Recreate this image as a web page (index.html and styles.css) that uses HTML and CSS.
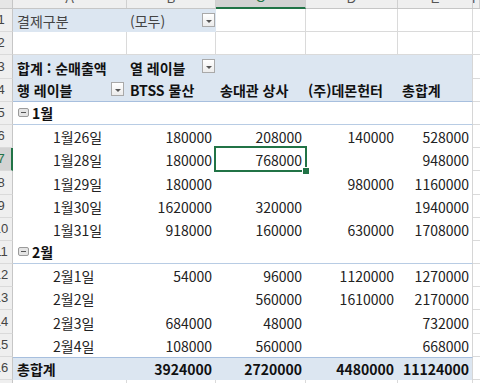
FILE: index.html
```html
<!DOCTYPE html>
<html lang="ko">
<head>
<meta charset="utf-8">
<link rel="stylesheet" href="styles.css">
</head>
<body>
<div class="sheet">
  <div class="row colhead">
    <div class="corner"></div>
    <div class="ch"><span>A</span></div>
    <div class="ch"><span>B</span></div>
    <div class="ch ch-sel"><span>C</span></div>
    <div class="ch"><span>D</span></div>
    <div class="ch"><span>E</span></div>
    <div class="ch"><span>F</span></div>
  </div>

  <div class="row">
    <div class="rn"><span>1</span></div>
    <div class="c filter">결제구분</div>
    <div class="c filter">(모두)<span class="dd"></span></div>
    <div class="c g"></div><div class="c g"></div><div class="c g"></div><div class="c g"></div>
  </div>

  <div class="row">
    <div class="rn"><span>2</span></div>
    <div class="c g"></div><div class="c g"></div><div class="c g"></div><div class="c g"></div><div class="c g"></div><div class="c g"></div>
  </div>

  <div class="row head">
    <div class="rn"><span>3</span></div>
    <div class="c b">합계 : 순매출액</div>
    <div class="c b">열 레이블<span class="dd"></span></div>
    <div class="c"></div><div class="c"></div><div class="c e"></div><div class="c g"></div>
  </div>

  <div class="row head head-last">
    <div class="rn"><span>4</span></div>
    <div class="c b">행 레이블<span class="dd dd-a"></span></div>
    <div class="c b">BTSS 물산</div>
    <div class="c b">송대관 상사</div>
    <div class="c b hd">(주)데몬헌터</div>
    <div class="c b e">총합계</div>
    <div class="c g"></div>
  </div>

  <div class="row grp">
    <div class="rn"><span>5</span></div>
    <div class="c b"><span class="tog"><svg width="11" height="9" viewBox="0 0 11 9"><rect x="0.5" y="0.5" width="10" height="8" rx="1.5" fill="#e4e4e4" stroke="#9a9a9a"/><path d="M3 4.5h5" stroke="#555" stroke-width="1"/></svg></span>1월</div>
    <div class="c"></div><div class="c"></div><div class="c"></div><div class="c e"></div><div class="c g"></div>
  </div>

  <div class="row">
    <div class="rn"><span>6</span></div>
    <div class="c item">1월26일</div>
    <div class="c n">180000</div><div class="c n">208000</div><div class="c n">140000</div><div class="c n e">528000</div><div class="c g"></div>
  </div>
  <div class="row">
    <div class="rn rn-sel"><span>7</span></div>
    <div class="c item">1월28일</div>
    <div class="c n">180000</div><div class="c n sel">768000</div><div class="c n"></div><div class="c n e">948000</div><div class="c g"></div>
  </div>
  <div class="row">
    <div class="rn"><span>8</span></div>
    <div class="c item">1월29일</div>
    <div class="c n">180000</div><div class="c n"></div><div class="c n">980000</div><div class="c n e">1160000</div><div class="c g"></div>
  </div>
  <div class="row">
    <div class="rn"><span>9</span></div>
    <div class="c item">1월30일</div>
    <div class="c n">1620000</div><div class="c n">320000</div><div class="c n"></div><div class="c n e">1940000</div><div class="c g"></div>
  </div>
  <div class="row">
    <div class="rn"><span>10</span></div>
    <div class="c item">1월31일</div>
    <div class="c n">918000</div><div class="c n">160000</div><div class="c n">630000</div><div class="c n e">1708000</div><div class="c g"></div>
  </div>

  <div class="row grp">
    <div class="rn"><span>11</span></div>
    <div class="c b"><span class="tog"><svg width="11" height="9" viewBox="0 0 11 9"><rect x="0.5" y="0.5" width="10" height="8" rx="1.5" fill="#e4e4e4" stroke="#9a9a9a"/><path d="M3 4.5h5" stroke="#555" stroke-width="1"/></svg></span>2월</div>
    <div class="c"></div><div class="c"></div><div class="c"></div><div class="c e"></div><div class="c g"></div>
  </div>

  <div class="row">
    <div class="rn"><span>12</span></div>
    <div class="c item">2월1일</div>
    <div class="c n">54000</div><div class="c n">96000</div><div class="c n">1120000</div><div class="c n e">1270000</div><div class="c g"></div>
  </div>
  <div class="row">
    <div class="rn"><span>13</span></div>
    <div class="c item">2월2일</div>
    <div class="c n"></div><div class="c n">560000</div><div class="c n">1610000</div><div class="c n e">2170000</div><div class="c g"></div>
  </div>
  <div class="row">
    <div class="rn"><span>14</span></div>
    <div class="c item">2월3일</div>
    <div class="c n">684000</div><div class="c n">48000</div><div class="c n"></div><div class="c n e">732000</div><div class="c g"></div>
  </div>
  <div class="row">
    <div class="rn"><span>15</span></div>
    <div class="c item">2월4일</div>
    <div class="c n">108000</div><div class="c n">560000</div><div class="c n"></div><div class="c n e">668000</div><div class="c g"></div>
  </div>

  <div class="row total">
    <div class="rn"><span>16</span></div>
    <div class="c b">총합계</div>
    <div class="c n b">3924000</div><div class="c n b">2720000</div><div class="c n b">4480000</div><div class="c n b e">11124000</div><div class="c g"></div>
  </div>

  <div class="row">
    <div class="rn"><span>17</span></div>
    <div class="c g"></div><div class="c g"></div><div class="c g"></div><div class="c g"></div><div class="c g"></div><div class="c g"></div>
  </div>
</div>
</body>
</html>
```

FILE: styles.css
```css
* { box-sizing: border-box; margin: 0; padding: 0; }
html, body { background: #fff; }
body {
  width: 480px;
  height: 383px;
  overflow: hidden;
  font-family: "Noto Sans CJK KR", "Noto Sans", sans-serif;
  font-size: 14px;
  color: #222;
}
.sheet { display: flex; flex-direction: column; width: 480px; }
.row {
  display: grid;
  grid-template-columns: 13px 114px 89px 90px 92px 75px 1fr;
  height: 23.2px;
  flex: none;
}
.colhead {
  height: 9px;
  background: #efefef;
  border-bottom: 1px solid #c6c6c6;
}
.corner { background: #e6e6e6; border-right: 1px solid #c6c6c6; }
.ch {
  border-right: 1px solid #d0d0d0;
  overflow: hidden;
  display: flex;
  justify-content: center;
  align-items: flex-end;
  font-family: "Liberation Sans", sans-serif;
  font-size: 13px;
  line-height: 13px;
  color: #555;
}
.ch span { margin-bottom: 3px; }
.ch-sel {
  background: #d3d3d3;
  color: #217346;
  border-bottom: 2px solid #217346;
  margin-bottom: -1px;
}
.rn {
  display: flex;
  overflow: hidden;
  align-items: flex-end;
  background: #efefef;
  border-right: 1px solid #c6c6c6;
  border-bottom: 1px solid #dadada;
  font-family: "Liberation Sans", sans-serif;
  font-size: 13px;
  line-height: 16px;
  color: #444;
  padding-bottom: 3px;
}
.rn span { flex: 0 0 30px; margin-left: -14px; text-align: center; }
.rn-sel { background: #d3d3d3; border-right: 2px solid #217346; color: #217346; }

.c {
  display: flex;
  align-items: flex-end;
  white-space: nowrap;
  line-height: 16px;
  padding: 0 4px 3px 4px;
  background: #fff;
}
.g { border-right: 1px solid #dadada; border-bottom: 1px solid #dadada; }
.e { border-right: 1px solid #d6d6d6; }
.filter { background: #dce6f1; color: #444; }
.filter + .filter { padding-left: 3px; }
.b { font-weight: 700; color: #111; }
.head .c:not(.g) { background: #dce6f1; }
.head .c:nth-child(3) { padding-left: 3px; }
.head .hd { padding-left: 2px; }
.head-last .c:not(.g) { border-bottom: 1px solid #a7bfde; }
.grp .c:not(.g) { border-bottom: 1px solid #b8cce4; }
.grp .c:nth-child(2) { padding-left: 5px; }
.tog { display: flex; align-self: center; margin: 3px 3px 0 0; }
.item { padding-left: 40px; }
.n { justify-content: flex-end; }
.n.e { padding-right: 3px; }
.total .c:not(.g) { background: #dce6f1; border-top: 1px solid #a7bfde; }

.dd {
  margin-left: auto;
  align-self: center;
  width: 13px;
  height: 14px;
  margin-top: 2px;
  margin-right: -3px;
  border: 1px solid #a9a9a9;
  background: linear-gradient(#ffffff, #ececec);
  position: relative;
}
.dd::after {
  content: "";
  position: absolute;
  left: 3px;
  top: 6px;
  border-left: 3px solid transparent;
  border-right: 3px solid transparent;
  border-top: 3px solid #555;
}
.dd-a { margin-right: -1px; }

.sel { position: relative; z-index: 2; overflow: visible; }
.sel::after {
  content: "";
  position: absolute;
  left: -2px;
  top: -2px;
  right: -1px;
  bottom: -1px;
  border: 2px solid #217346;
}
.sel::before {
  content: "";
  position: absolute;
  right: -4px;
  bottom: -4px;
  width: 6px;
  height: 6px;
  background: #217346;
  border: 1px solid #fff;
  z-index: 1;
}
```
